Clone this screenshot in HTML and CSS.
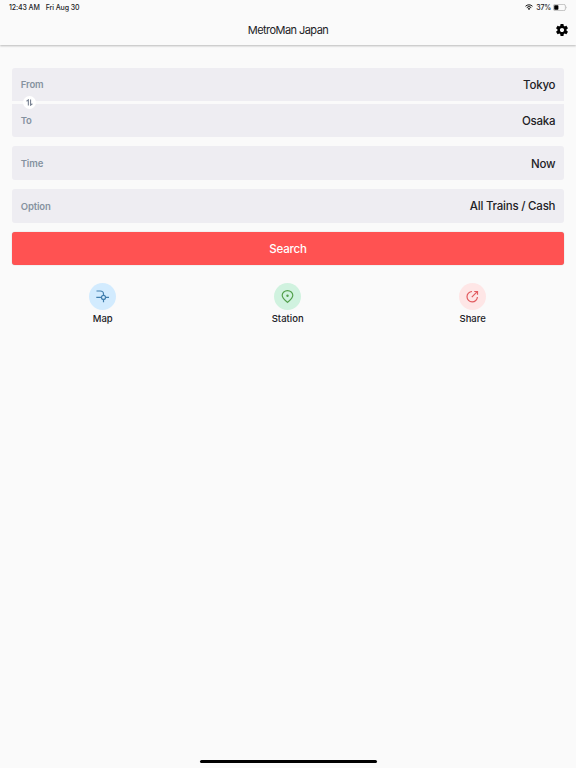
FILE: index.html
```html
<!DOCTYPE html>
<html lang="en">
<head>
  <meta charset="UTF-8" />
  <title>MetroMan Japan</title>
  <meta name="viewport" content="width=device-width, initial-scale=1" />
  <link rel="stylesheet" href="styles.css">
</head>
<body>
  <header class="header">
    <div class="status">
      <div class="status-left"><span class="clock">12:43 AM</span><span class="date">Fri Aug 30</span></div>
      <div class="status-right">
        <svg class="wifi" viewBox="0 0 16 12" fill="none" stroke="#111" stroke-width="2">
          <path d="M1 4.5a10 10 0 0 1 14 0M3.5 7.2a6.4 6.4 0 0 1 9 0"/>
          <path d="M8 12 5.4 9.3a3.7 3.7 0 0 1 5.2 0z" fill="#111" stroke="none"/>
        </svg>
        <span class="percent">37%</span>
        <svg class="battery" viewBox="0 0 14 7">
          <rect x=".4" y=".4" width="12" height="6.2" rx="1.6" fill="none" stroke="#aaa" stroke-width=".7"/>
          <rect x="1.2" y="1.2" width="4.2" height="4.6" rx=".7" fill="#000"/>
          <path d="M13.1 2.4q1 1.1 0 2.2z" fill="#aaa"/>
        </svg>
      </div>
    </div>
    <div class="navbar">
      <h1 class="title">MetroMan Japan</h1>
      <svg class="gear" viewBox="2 2 20 20">
        <path d="M19.43 12.98c.04-.32.07-.64.07-.98s-.03-.66-.07-.98l2.11-1.65c.19-.15.24-.42.12-.64l-2-3.46c-.12-.22-.39-.3-.61-.22l-2.49 1c-.52-.4-1.08-.73-1.69-.98l-.38-2.65C14.46 2.18 14.25 2 14 2h-4c-.25 0-.46.18-.49.42l-.38 2.65c-.61.25-1.17.59-1.69.98l-2.49-1c-.23-.09-.49 0-.61.22l-2 3.46c-.13.22-.07.49.12.64l2.11 1.65c-.04.32-.07.65-.07.98s.03.66.07.98l-2.11 1.65c-.19.15-.24.42-.12.64l2 3.46c.12.22.39.3.61.22l2.49-1c.52.4 1.08.73 1.69.98l.38 2.65c.03.24.24.42.49.42h4c.25 0 .46-.18.49-.42l.38-2.65c.61-.25 1.17-.59 1.69-.98l2.49 1c.23.09.49 0 .61-.22l2-3.46c.12-.22.07-.49-.12-.64l-2.11-1.65zM12 15.5c-1.93 0-3.5-1.57-3.5-3.5s1.57-3.5 3.5-3.5 3.5 1.57 3.5 3.5-1.57 3.5-3.5 3.5z"/>
      </svg>
    </div>
  </header>

  <main class="content">
    <div class="route">
      <div class="field"><span class="label">From</span><span class="value">Tokyo</span></div>
      <div class="field"><span class="label">To</span><span class="value">Osaka</span></div>
      <div class="swap">
        <svg viewBox="0 0 8 8" fill="none" stroke="#7b8494" stroke-width="1.3">
          <path d="M.6 2.6 2.7 1v6.500M5.200.5V7l2.100-1.600"/>
        </svg>
      </div>
    </div>
    <div class="field"><span class="label">Time</span><span class="value">Now</span></div>
    <div class="field"><span class="label">Option</span><span class="value">All Trains / Cash</span></div>
    <button class="search">Search</button>
  </main>

  <nav class="actions">
    <div class="action">
      <div class="circle blue">
        <svg viewBox="0 0 27 27">
          <path d="M7.500 8h3.700c2.200 0 3.300 1 3.300 3v1.500M14.500 16.500v2.800M7.300 14.400h5M16.700 14.400h3.300"/>
          <circle cx="14.500" cy="14.400" r="2"/>
        </svg>
      </div>
      <span class="caption">Map</span>
    </div>
    <div class="action">
      <div class="circle green">
        <svg viewBox="0 0 27 27">
          <path d="M13.500 19.400c-2-1.700-5.300-4-5.300-7.100a5.300 4.700 0 0 1 10.600 0c0 3.100-3.300 5.400-5.300 7.100z"/>
          <circle class="dot" cx="13.500" cy="12.700" r="1.200"/>
        </svg>
      </div>
      <span class="caption">Station</span>
    </div>
    <div class="action">
      <div class="circle red">
        <svg viewBox="0 0 27 27">
          <path d="M13 8.500a5.200 5.200 0 1 0 5.400 5.400M12.800 14.100l5.400-5.400M15.200 8.500h3.300v3.300"/>
        </svg>
      </div>
      <span class="caption">Share</span>
    </div>
  </nav>

  <div class="home-bar"></div>
</body>
</html>
```
FILE: styles.css
```css
* { box-sizing: border-box; }

html, body { margin: 0; padding: 0; height: 100%; overflow: hidden; }

body {
  display: flex; flex-direction: column;
  background: #fafafa; color: #222226;
  font-family: Inter, Roboto, sans-serif;
}

.header {
  height: 45px; flex-shrink: 0;
  box-shadow: 0 1px 2px rgba(0,0,0,0.26);
}

.status {
  display: flex; justify-content: space-between;
  height: 14px; padding: 0 9px;
  font-size: 7px; line-height: 15px; font-weight: 500;
}
.status-left { display: flex; gap: 6px; }
.clock, .date { letter-spacing: -0.1px; }
.status-right { display: flex; align-items: center; }
.wifi { width: 8px; height: 6px; margin-right: 3px; }
.percent { letter-spacing: -0.2px; }
.battery { width: 14px; height: 7px; margin-left: 2px; }

.navbar {
  display: grid; grid-template-columns: 1fr auto 1fr; align-items: center;
  height: 31px; padding: 0 8px;
}
.title {
  grid-column: 2; margin: 0;
  font-size: 11px; font-weight: 400; letter-spacing: -0.55px;
}
.gear { width: 12px; height: 12px; justify-self: end; }

.content {
  display: flex; flex-direction: column; gap: 9.2px;
  padding: 22.7px 11.7px 0;
}

.route { position: relative; display: grid; gap: 2.5px; }
.route .field:first-child { border-radius: 3px 3px 0 0; }
.route .field:nth-child(2) { border-radius: 0 0 3px 3px; }

.field {
  display: flex; align-items: center; justify-content: space-between;
  height: 33.5px; padding: 1px 9px 0;
  background: #eeedf2; border-radius: 3px;
}
.label { font-size: 9.5px; font-weight: 600; letter-spacing: -0.1px; color: #8592a0; }
.value { font-size: 11.5px; font-weight: 500; letter-spacing: -0.22px; }

.swap {
  position: absolute; left: 11px; top: 28px;
  display: flex; align-items: center; justify-content: center;
  width: 13.5px; height: 13.5px;
  background: #fff; border-radius: 50%;
}
.swap svg { width: 7px; height: 7px; }

.search {
  height: 33.5px; padding: 0;
  background: #ff5252; color: #fff;
  border: none; border-radius: 3px;
  box-shadow: 0 0 1px rgba(0,0,0,0.35);
  font: 500 11.5px Inter, Roboto, sans-serif; letter-spacing: -0.2px;
}

.actions {
  display: grid; grid-template-columns: repeat(3, 1fr);
  padding: 18px 10.8px 0 10.2px;
}
.action { display: flex; flex-direction: column; align-items: center; }
.circle { width: 27px; height: 27px; border-radius: 50%; }
.circle svg {
  display: block; width: 27px; height: 27px;
  fill: none; stroke: currentColor; stroke-width: 1.2;
}
.circle .dot { fill: currentColor; stroke: none; }
.blue { background: #d2ebfe; color: #417fae; }
.green { background: #d0f2df; color: #54a04d; }
.red { background: #fee6e6; color: #e15b5f; }
.caption { margin-top: 2.5px; font-size: 9.5px; line-height: 12px; font-weight: 500; }

.home-bar {
  width: 177px; height: 3px; margin: auto auto 5px;
  background: #000; border-radius: 2px;
}
```
